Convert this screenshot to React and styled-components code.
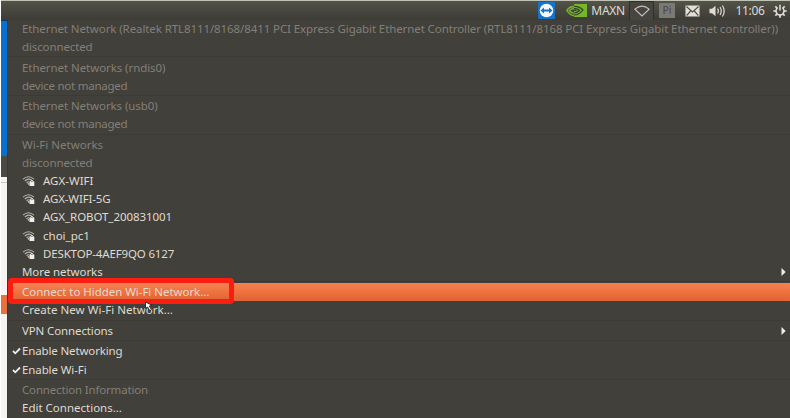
import React from "react";
import styled, { createGlobalStyle } from "styled-components";

const Global = createGlobalStyle`
  * { box-sizing: border-box; }
  body { margin: 0; background: #42403a; overflow: hidden; }
`;
const Screen = styled.div`
  position: relative;
  width: 790px;
  height: 418px;
  overflow: hidden;
  display: flex;
  flex-direction: column;
  border-left: 1px solid #fff;
  font-family: "Noto Sans", "Open Sans", sans-serif;
  font-size: 11.5px;
  color: #dfdbd2;
`;
const TopBar = styled.header`
  height: 20px;
  flex: none;
  border-top: 1px solid #bfc3b6;
  background: linear-gradient(#545349, #3c3b35);
  display: flex;
  justify-content: flex-end;
  align-items: center;
`;
const TraySlot = styled.div`
  width: ${(p) => p.$w}px;
  height: 19px;
  display: flex;
  align-items: center;
  justify-content: center;
  letter-spacing: ${(p) => p.$ls || 0}px;
  font-size: 12px;
  white-space: nowrap;
  svg { display: block; flex: none; }
`;
const ActiveSlot = styled(TraySlot)`
  border: 1px solid #302f2a;
  border-bottom: 0;
  background: #464540;
`;
const InputBadge = styled.span`
  width: 16px;
  height: 15px;
  background: #7b7974;
  color: #4a4944;
  font-size: 10.5px;
  line-height: 15px;
  text-align: center;
`;
const Body = styled.div`
  display: flex;
  flex: 1;
`;
const Desktop = styled.div`
  width: 6px;
  flex: none;
  display: flex;
  flex-direction: column;
  background: #f5f4f2;
`;
const Strip = styled.div`
  height: ${(p) => p.$h}px;
  background: ${(p) => p.$bg};
`;
const Menu = styled.main`
  flex: 1;
  min-width: 0;
  background: #42403a;
  border-left: 1px solid #3a3833;
`;
const Row = styled.div`
  height: 18.15px;
  display: flex;
  align-items: center;
  padding-left: 14px;
  position: relative;
  white-space: nowrap;
  line-height: 18px;
  letter-spacing: ${(p) => p.$ls || 0}px;
  color: ${(p) => (p.$dim ? "#827f78" : "#dfdbd2")};
  background: ${(p) => (p.$on ? "linear-gradient(#f48254, #f0713e 50%, #dc6436)" : "none")};
`;
const Separator = styled.div`
  height: 2.33px;
  border-top: 1px solid #3c3a35;
`;
const IconCell = styled.span`
  width: 21px;
  flex: none;
  display: flex;
`;
const Tick = styled.svg`
  position: absolute;
  left: 4px;
  top: 5px;
`;
const Arrow = styled.svg`
  margin-left: auto;
  margin-right: 4px;
`;
const Highlight = styled.div`
  position: absolute;
  left: 7px;
  top: 278px;
  width: 226px;
  height: 26px;
  border: 5px solid #fb1d10;
  border-radius: 4px;
`;
const Pointer = styled.svg`
  position: absolute;
  left: 143px;
  top: 300px;
`;

const LockedWifi = () => (
  <svg width="14" height="12" viewBox="0 0 14 12" fill="none" stroke="#b9b6ad">
    <path d="M1 4.1Q6.5-.7 12 4.1M2.8 6Q6.5 2.8 9.8 5.2M4.6 7.8Q6.2 6.4 7.5 7" strokeWidth="1.1" />
    <path d="M5.2 8.8L7.2 7.8V10.2Z" fill="#cbc8bf" stroke="none" />
    <path d="M8.7 7V6.2Q10 4.5 11.2 6.2V7" stroke="#eeece6" />
    <path d="M7.5 6.7H12.3V11H7.5Z" fill="#f2f0eb" stroke="none" />
  </svg>
);

const rows = [
  { t: "Ethernet Network (Realtek RTL8111/8168/8411 PCI Express Gigabit Ethernet Controller (RTL8111/8168 PCI Express Gigabit Ethernet controller))", dim: 1, ls: -0.095 },
  { t: "disconnected", dim: 1, sep: 1, ls: -0.12 },
  { t: "Ethernet Networks (rndis0)", dim: 1, ls: -0.07 },
  { t: "device not managed", dim: 1, sep: 1, ls: -0.24 },
  { t: "Ethernet Networks (usb0)", dim: 1, ls: -0.08 },
  { t: "device not managed", dim: 1, sep: 1, ls: -0.24 },
  { t: "Wi-Fi Networks", dim: 1 },
  { t: "disconnected", dim: 1, ls: -0.12 },
  { t: "AGX-WIFI", wifi: 1 },
  { t: "AGX-WIFI-5G", wifi: 1, ls: -0.15 },
  { t: "AGX_ROBOT_200831001", wifi: 1, ls: -0.07 },
  { t: "choi_pc1", wifi: 1 },
  { t: "DESKTOP-4AEF9QO 6127", wifi: 1, ls: -0.15 },
  { t: "More networks", sub: 1, sep: 1, ls: -0.07 },
  { t: "Connect to Hidden Wi-Fi Network…", on: 1, ls: -0.04 },
  { t: "Create New Wi-Fi Network…", sep: 1, ls: 0.03 },
  { t: "VPN Connections", sub: 1, sep: 1, ls: -0.12 },
  { t: "Enable Networking", tick: 1, ls: -0.14 },
  { t: "Enable Wi-Fi", tick: 1, sep: 1, ls: -0.1 },
  { t: "Connection Information", dim: 1, ls: -0.17 },
  { t: "Edit Connections…" },
];

export default function App() {
  return (
    <Screen>
      <Global />
      <TopBar>
        <TraySlot $w={38}>
          <svg width="17" height="17" viewBox="0 0 17 17">
            <rect width="17" height="17" rx="1" fill="#1673c9" />
            <circle cx="8.5" cy="8.5" r="6.8" fill="#f4f8fc" />
            <path d="M2.5 8.5L6 5.6V7.5H11V5.6L14.5 8.5L11 11.4V9.5H6V11.4Z" fill="#1673c9" />
          </svg>
        </TraySlot>
        <TraySlot $w={22}>
          <svg width="21" height="15" viewBox="0 0 21 15" fill="none">
            <path d="M8 1H21V14H8Z" fill="#76b72a" />
            <path d="M8 3.5Q3.5 3.7.8 7.3Q4 12.5 9 12.7Q14.5 12.4 18 9.5M8 5.5Q5 5.7 3.3 7.5Q5.5 10.5 9 10.7Q12.5 10.3 14 7Q12 3.8 8 3.7" stroke="#76b72a" strokeWidth="1.3" />
            <path d="M8 3.3Q13.5 3 17 7Q13 12 8 12M8 5.7Q11.5 5.2 13.5 7.5Q11 10 8 10M8 7.3Q9.8 7 10.5 7.8" stroke="#34422a" strokeWidth="1.2" />
          </svg>
        </TraySlot>
        <TraySlot $w={42} $ls={-0.35}>MAXN</TraySlot>
        <ActiveSlot $w={25}>
          <svg width="16" height="12" viewBox="0 0 16 12" fill="none" stroke="#c6c3ba">
            <path d="M.9 4.2Q8-2 15.1 4.2L8 11Z" strokeWidth="1.1" />
          </svg>
        </ActiveSlot>
        <TraySlot $w={26}><InputBadge>Pi</InputBadge></TraySlot>
        <TraySlot $w={25}>
          <svg width="15" height="12" viewBox="0 0 16 12" preserveAspectRatio="none">
            <rect x=".5" y=".5" width="15" height="11" fill="#e2dfd7" />
            <path d="M1.5 1.5L8 7L14.5 1.5M1.8 10.5L6 6M14.2 10.5L10 6" fill="none" stroke="#4b4a43" strokeWidth="1.1" />
          </svg>
        </TraySlot>
        <TraySlot $w={25}>
          <svg width="17" height="14" viewBox="0 0 17 14" fill="none" stroke="#dfdbd2" strokeWidth="1.2">
            <path d="M.5 4.8H3L6.5 1.8V12.2L3 9.2H.5Z" fill="#dfdbd2" stroke="none" />
            <path d="M8.6 4.7Q10.1 7 8.6 9.3M11 3Q13.5 7 11 11M13.4 1.5Q17 7 13.4 12.5" />
          </svg>
        </TraySlot>
        <TraySlot $w={40} $ls={-0.35}>11:06</TraySlot>
        <TraySlot $w={20}>
          <svg width="14" height="14" viewBox="0 0 14 14" fill="none" stroke="#e2dfd7">
            <path d="M4.7 3.7A4 4 0 1 0 9.3 3.7M7 .8V6.6" strokeWidth="1.5" />
            <path d="M.3 7H3M11 7H13.7M7 11V13.7M2.3 2.3L4 4M11.7 2.3L10 4M2.3 11.7L4 10M11.7 11.7L10 10" strokeWidth="1.7" />
          </svg>
        </TraySlot>
      </TopBar>
      <Body>
        <Desktop>
          <Strip $h={1} $bg="#08396a" />
          <Strip $h={135} $bg="#0871cf" />
          <Strip $h={21} $bg="#4b4944" />
          <Strip $h={5} $bg="#f5f4f2" />
          <Strip $h={1} $bg="#c9c7c3" />
          <Strip $h={112} $bg="#f5f4f2" />
          <Strip $h={19} $bg="#e9713e" />
        </Desktop>
        <Menu>
          {rows.map((r, i) => (
            <React.Fragment key={i}>
              <Row $dim={r.dim} $on={r.on} $ls={r.ls}>
                {r.tick && (
                  <Tick width="9" height="8" viewBox="0 0 9 8">
                    <path d="M1 4L3.3 6.3L8 1.5" fill="none" stroke="#efede7" strokeWidth="1.8" />
                  </Tick>
                )}
                {r.wifi && <IconCell><LockedWifi /></IconCell>}
                <span>{r.t}</span>
                {r.sub && (
                  <Arrow width="5" height="8" viewBox="0 0 5 8">
                    <path d="M.5 0L4.7 4L.5 8Z" fill="#efede7" />
                  </Arrow>
                )}
              </Row>
              {r.sep && <Separator />}
            </React.Fragment>
          ))}
        </Menu>
      </Body>
      <Highlight />
      <Pointer width="10" height="14" viewBox="0 0 10 14">
        <path d="M1.5 2V8.5L3.6 7L5.8 10.6L7.4 9.6L5.4 6L8 5.2Z" fill="#fff" stroke="#282622" strokeWidth=".9" />
      </Pointer>
    </Screen>
  );
}
